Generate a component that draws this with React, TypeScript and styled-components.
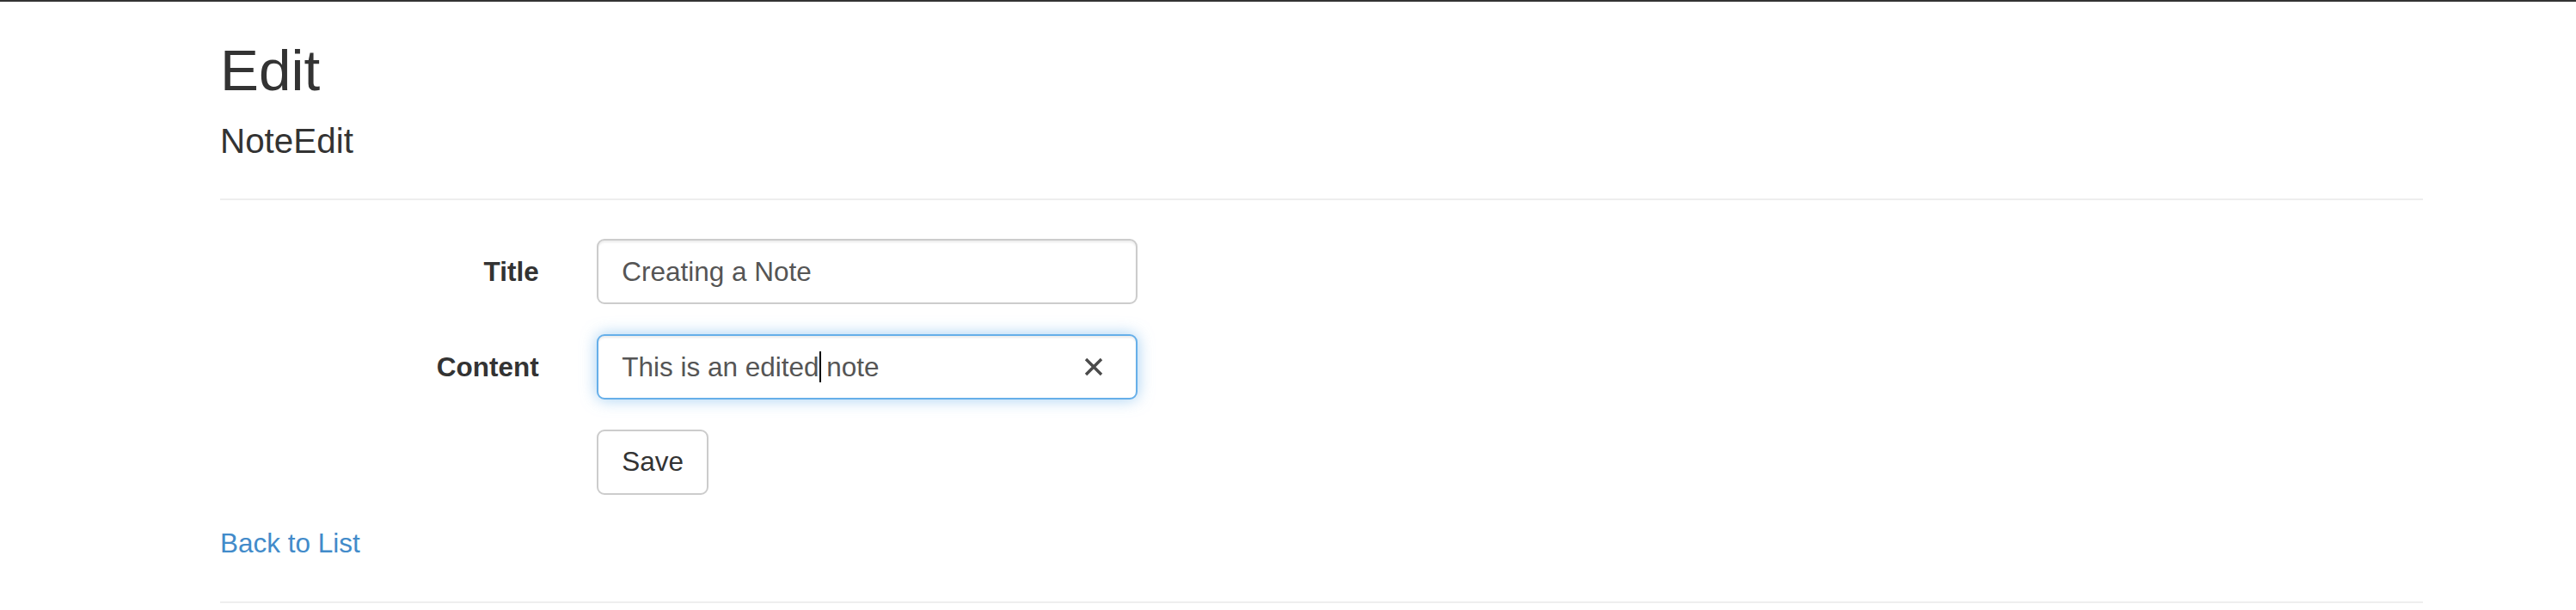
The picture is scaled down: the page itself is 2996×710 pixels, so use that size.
import React from "react";
import styled, { createGlobalStyle, css } from "styled-components";

const GlobalStyle = createGlobalStyle`
  html, body {
    margin: 0;
    padding: 0;
    background: #ffffff;
  }
  body {
    font-family: "Liberation Sans", Arial, Helvetica, sans-serif;
    font-size: 31.5px;
    line-height: 1.42857;
    color: #333333;
  }
  *, *::before, *::after {
    box-sizing: border-box;
  }
`;

const TopRule = styled.div`
  height: 2px;
  background: #333333;
`;

const Container = styled.main`
  margin-left: 222.3px;
  width: 2629px;
  padding: 0 33.7px;
`;

const PageTitle = styled.h2`
  margin: 43px 0 22.5px;
  font-size: 67.4px;
  line-height: 1.1;
  font-weight: 400;
  color: #333333;
`;

const SubTitle = styled.h4`
  margin: 22.5px 0 22.5px;
  font-size: 40.4px;
  line-height: 1.1;
  font-weight: 400;
  color: #333333;
`;

const Rule = styled.hr<{ $end?: boolean }>`
  margin: 45px 0 ${(p) => (p.$end ? "0" : "45px")};
  border: 0;
  border-top: 2.25px solid #eeeeee;
  height: 0;
`;

const Form = styled.form`
  margin: 0;
`;

const FormGroup = styled.div`
  display: flex;
  margin: 0 -33.7px 34.5px;
`;

const LabelCol = styled.label`
  flex: 0 0 438.2px;
  padding: 15.7px 33.7px 0;
  text-align: right;
  font-weight: 700;
  line-height: 45px;
  color: #333333;
`;

const FieldCol = styled.div`
  flex: 1;
  padding: 0 33.7px;
`;

const fieldBase = css`
  display: block;
  width: 629px;
  height: 76.4px;
  padding: 13.5px 27px;
  font-family: "Liberation Sans", Arial, Helvetica, sans-serif;
  font-size: 31.5px;
  line-height: 45px;
  color: #555555;
  background: #ffffff;
  border: 2.25px solid #cccccc;
  border-radius: 9px;
  box-shadow: inset 0 2.25px 2.25px rgba(0, 0, 0, 0.075);
`;

const TextInput = styled.input`
  ${fieldBase}
  outline: none;
`;

const FocusedField = styled.div`
  ${fieldBase}
  display: flex;
  align-items: center;
  border-color: #66afe9;
  box-shadow: inset 0 2.25px 2.25px rgba(0, 0, 0, 0.075),
    0 0 18px rgba(102, 175, 233, 0.6);
`;

const FieldText = styled.span`
  white-space: pre;
  flex: 1;
`;

const Caret = styled.span`
  display: inline-block;
  width: 0;
  height: 36px;
  border-left: 2px solid #000000;
  margin-right: -2px;
  vertical-align: -7px;
`;

const ClearIcon = styled.svg`
  flex: 0 0 auto;
  width: 24px;
  height: 24px;
  margin-right: 10px;
`;

const Button = styled.button`
  display: inline-block;
  padding: 13.5px 27px;
  font-family: "Liberation Sans", Arial, Helvetica, sans-serif;
  font-size: 31.5px;
  line-height: 45px;
  color: #333333;
  background: #ffffff;
  border: 2.25px solid #cccccc;
  border-radius: 9px;
  cursor: pointer;
`;

const BackRow = styled.div`
  line-height: 45px;
`;

const Link = styled.a`
  color: #428bca;
  text-decoration: none;
`;

export default function App() {
  return (
    <>
      <GlobalStyle />
      <TopRule />
      <Container>
        <PageTitle>Edit</PageTitle>
        <SubTitle>NoteEdit</SubTitle>
        <Rule />
        <Form onSubmit={(e) => e.preventDefault()}>
          <FormGroup>
            <LabelCol htmlFor="Title">Title</LabelCol>
            <FieldCol>
              <TextInput id="Title" defaultValue="Creating a Note" />
            </FieldCol>
          </FormGroup>
          <FormGroup>
            <LabelCol>Content</LabelCol>
            <FieldCol>
              <FocusedField role="textbox" aria-label="Content">
                <FieldText>
                  This is an edited
                  <Caret />
                  {" note"}
                </FieldText>
                <ClearIcon viewBox="0 0 24 24" aria-hidden="true">
                  <path
                    d="M3 3 L21 21 M21 3 L3 21"
                    stroke="#4a4a4a"
                    strokeWidth="3.4"
                    fill="none"
                  />
                </ClearIcon>
              </FocusedField>
            </FieldCol>
          </FormGroup>
          <FormGroup>
            <LabelCol as="div" />
            <FieldCol>
              <Button type="submit">Save</Button>
            </FieldCol>
          </FormGroup>
        </Form>
        <BackRow>
          <Link href="#">Back to List</Link>
        </BackRow>
        <Rule $end />
      </Container>
    </>
  );
}
